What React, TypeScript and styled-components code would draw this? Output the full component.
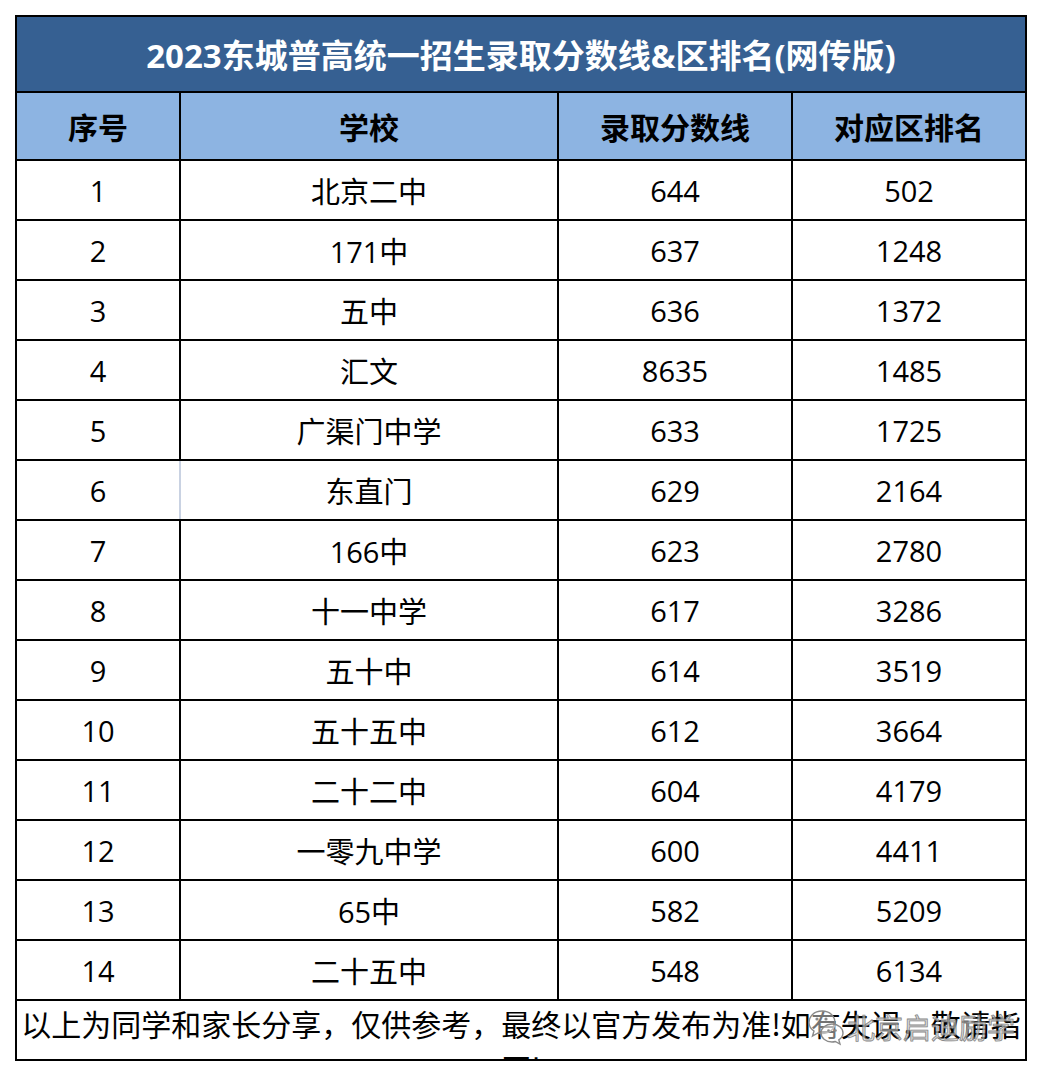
import React from "react";
import styled, { createGlobalStyle } from "styled-components";

const GlobalStyle = createGlobalStyle`
  html, body {
    margin: 0;
    padding: 0;
    background: #ffffff;
  }
  body {
    font-family: "Open Sans", "Noto Sans CJK SC", sans-serif;
    color: #000;
  }
`;

const Page = styled.div`
  padding: 15px;
`;

const Sheet = styled.div`
  display: grid;
  grid-template-columns: 162px 376px 232px 232px;
  grid-template-rows: 74px 66px repeat(14, 58px) 58px;
  gap: 2px;
  padding: 2px;
  width: max-content;
  background: #000;
`;

const Title = styled.div`
  grid-column: 1 / -1;
  background: #366092;
  color: #fff;
  font-family: "Open Sans", "Noto Sans CJK SC", sans-serif;
  font-weight: 700;
  font-size: 33px;
  display: flex;
  align-items: center;
  justify-content: center;
`;

const HeadCell = styled.div`
  background: #8db4e2;
  font-family: "Noto Sans CJK SC", sans-serif;
  font-weight: 700;
  font-size: 30px;
  display: flex;
  align-items: center;
  justify-content: center;
`;

const Cell = styled.div<{ $faint?: boolean }>`
  background: #fff;
  font-family: "Open Sans", "Noto Sans CJK SC", sans-serif;
  font-size: 29px;
  display: flex;
  align-items: center;
  justify-content: center;
  ${(p) =>
    p.$faint
      ? `margin-right: -2px; border-right: 2px solid #c9d2e2;`
      : ""}
`;

const Footer = styled.div`
  grid-column: 1 / -1;
  position: relative;
  background: #fff;
  overflow: hidden;
  font-family: "Noto Sans CJK SC", sans-serif;
  font-size: 30px;
  line-height: 44px;
  text-align: center;
`;

const Watermark = styled.div`
  position: absolute;
  left: 790px;
  top: 6px;
  display: flex;
  align-items: center;
  gap: 2px;
  pointer-events: none;
`;

const WatermarkText = styled.span`
  font-family: "Noto Sans CJK SC", sans-serif;
  font-size: 28px;
  line-height: 36px;
  color: rgba(255, 255, 255, 0.45);
  -webkit-text-stroke: 0.8px rgba(110, 110, 110, 0.8);
  text-shadow: 0 0 1px rgba(120, 120, 120, 0.5);
`;

const rows: [number, string, string, string][] = [
  [1, "北京二中", "644", "502"],
  [2, "171中", "637", "1248"],
  [3, "五中", "636", "1372"],
  [4, "汇文", "8635", "1485"],
  [5, "广渠门中学", "633", "1725"],
  [6, "东直门", "629", "2164"],
  [7, "166中", "623", "2780"],
  [8, "十一中学", "617", "3286"],
  [9, "五十中", "614", "3519"],
  [10, "五十五中", "612", "3664"],
  [11, "二十二中", "604", "4179"],
  [12, "一零九中学", "600", "4411"],
  [13, "65中", "582", "5209"],
  [14, "二十五中", "548", "6134"],
];

const WeChatIcon = () => (
  <svg width="38" height="40" viewBox="0 0 38 40">
    <g fill="rgba(255,255,255,0.45)" stroke="#8a8a8a" strokeWidth="1.4">
      <path d="M15 4 C7 4 2 9.5 2 15.5 C2 19 4 22 7 24 L5.5 29 L11 26 C12.3 26.4 13.6 26.6 15 26.6 C23 26.6 28 21.5 28 15.5 C28 9.5 23 4 15 4 Z" />
      <path d="M25 17 C18.5 17 14 21.2 14 26 C14 30.8 18.5 35 25 35 C26.2 35 27.3 34.8 28.3 34.5 L33 37 L31.8 32.8 C34.3 31.2 36 28.8 36 26 C36 21.2 31.5 17 25 17 Z" />
    </g>
    <g fill="#8a8a8a">
      <circle cx="10" cy="12" r="1.6" />
      <circle cx="19" cy="12" r="1.6" />
      <circle cx="21.5" cy="23.5" r="1.3" />
      <circle cx="28.5" cy="23.5" r="1.3" />
    </g>
  </svg>
);

export default function App() {
  return (
    <>
      <GlobalStyle />
      <Page>
        <Sheet>
          <Title>2023东城普高统一招生录取分数线&amp;区排名(网传版)</Title>
          <HeadCell>序号</HeadCell>
          <HeadCell>学校</HeadCell>
          <HeadCell>录取分数线</HeadCell>
          <HeadCell>对应区排名</HeadCell>
          {rows.map(([n, school, score, rank]) => (
            <React.Fragment key={n}>
              <Cell $faint={n === 6}>{n}</Cell>
              <Cell>{school}</Cell>
              <Cell>{score}</Cell>
              <Cell>{rank}</Cell>
            </React.Fragment>
          ))}
          <Footer>
            以上为同学和家长分享，仅供参考，最终以官方发布为准!如有失误，敬请指正!
            <Watermark>
              <WeChatIcon />
              <WatermarkText>北京启迪励学</WatermarkText>
            </Watermark>
          </Footer>
        </Sheet>
      </Page>
    </>
  );
}
